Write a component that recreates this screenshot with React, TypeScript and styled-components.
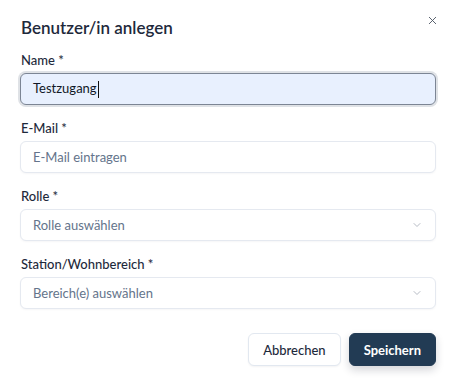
import styled, { createGlobalStyle } from 'styled-components';

const GlobalStyle = createGlobalStyle`
  html, body {
    margin: 0;
    background: #ffffff;
  }
  body {
    font-family: Lato, 'Noto Sans', sans-serif;
    color: #1e293b;
  }
`;

const Dialog = styled.div`
  position: relative;
  width: 458px;
  height: 386px;
  box-sizing: border-box;
  padding: 16px 22px 0 20px;
  background: #fff;
`;

const Title = styled.h2`
  margin: 0 0 12px 1px;
  font-size: 17px;
  font-weight: 600;
  line-height: 24px;
  color: #1e293b;
`;

const CloseButton = styled.button`
  position: absolute;
  top: 13px;
  right: 19px;
  width: 14px;
  height: 14px;
  padding: 0;
  border: none;
  background: none;
  display: flex;
  align-items: center;
  justify-content: center;
`;

const Form = styled.div`
  display: flex;
  flex-direction: column;
  gap: 15px;
`;

const Field = styled.div`
  display: flex;
  flex-direction: column;
  gap: 4px;
`;

const Label = styled.label`
  font-size: 13px;
  font-weight: 500;
  line-height: 17px;
  color: #1e293b;
  padding-left: 1px;
`;

const Box = styled.div<{ $focused?: boolean }>`
  height: 32px;
  box-sizing: border-box;
  display: flex;
  align-items: center;
  justify-content: space-between;
  padding: 0 12px;
  border-radius: 6px;
  font-size: 13px;
  border: 1px solid ${(p) => (p.$focused ? '#7c8594' : '#e5e9f0')};
  background: ${(p) => (p.$focused ? '#e8f0fe' : '#ffffff')};
  box-shadow: ${(p) =>
    p.$focused ? '0 0 0 2px #dfe2e6' : '0 1px 2px rgba(15, 23, 42, 0.04)'};
  color: ${(p) => (p.$focused ? '#111827' : '#64748b')};
`;

const Caret = styled.span`
  display: inline-block;
  width: 1px;
  height: 17px;
  background: #111;
  margin-left: 1px;
  vertical-align: middle;
`;

const Footer = styled.div`
  display: flex;
  justify-content: flex-end;
  gap: 8px;
  margin-top: 24px;
`;

const Button = styled.button<{ $primary?: boolean }>`
  height: 33px;
  padding: 0 14px;
  border-radius: 6px;
  font-family: inherit;
  font-size: 13px;
  font-weight: ${(p) => (p.$primary ? 700 : 500)};
  border: 1px solid ${(p) => (p.$primary ? '#223b54' : '#e2e8f0')};
  background: ${(p) => (p.$primary ? '#223b54' : '#ffffff')};
  color: ${(p) => (p.$primary ? '#ffffff' : '#1e293b')};
  box-shadow: ${(p) =>
    p.$primary ? '0 4px 8px rgba(15, 23, 42, 0.18)' : '0 1px 2px rgba(15, 23, 42, 0.05)'};
`;

const Chevron = () => (
  <svg width="12" height="12" viewBox="0 0 24 24" fill="none" stroke="#a3aab5" strokeWidth="1.6" strokeLinecap="round" strokeLinejoin="round">
    <path d="m6 9 6 6 6-6" />
  </svg>
);

export default function App() {
  return (
    <>
      <GlobalStyle />
      <Dialog>
        <CloseButton aria-label="Schließen">
          <svg width="11" height="11" viewBox="0 0 24 24" fill="none" stroke="#4b5563" strokeWidth="2" strokeLinecap="round">
            <path d="M19 5 5 19M5 5l14 14" />
          </svg>
        </CloseButton>
        <Title>Benutzer/in anlegen</Title>
        <Form>
          <Field>
            <Label>Name *</Label>
            <Box $focused>
              <span>
                Testzugang
                <Caret />
              </span>
            </Box>
          </Field>
          <Field>
            <Label>E-Mail *</Label>
            <Box>E-Mail eintragen</Box>
          </Field>
          <Field>
            <Label>Rolle *</Label>
            <Box>
              Rolle auswählen
              <Chevron />
            </Box>
          </Field>
          <Field>
            <Label>Station/Wohnbereich *</Label>
            <Box>
              Bereich(e) auswählen
              <Chevron />
            </Box>
          </Field>
        </Form>
        <Footer>
          <Button>Abbrechen</Button>
          <Button $primary>Speichern</Button>
        </Footer>
      </Dialog>
    </>
  );
}
